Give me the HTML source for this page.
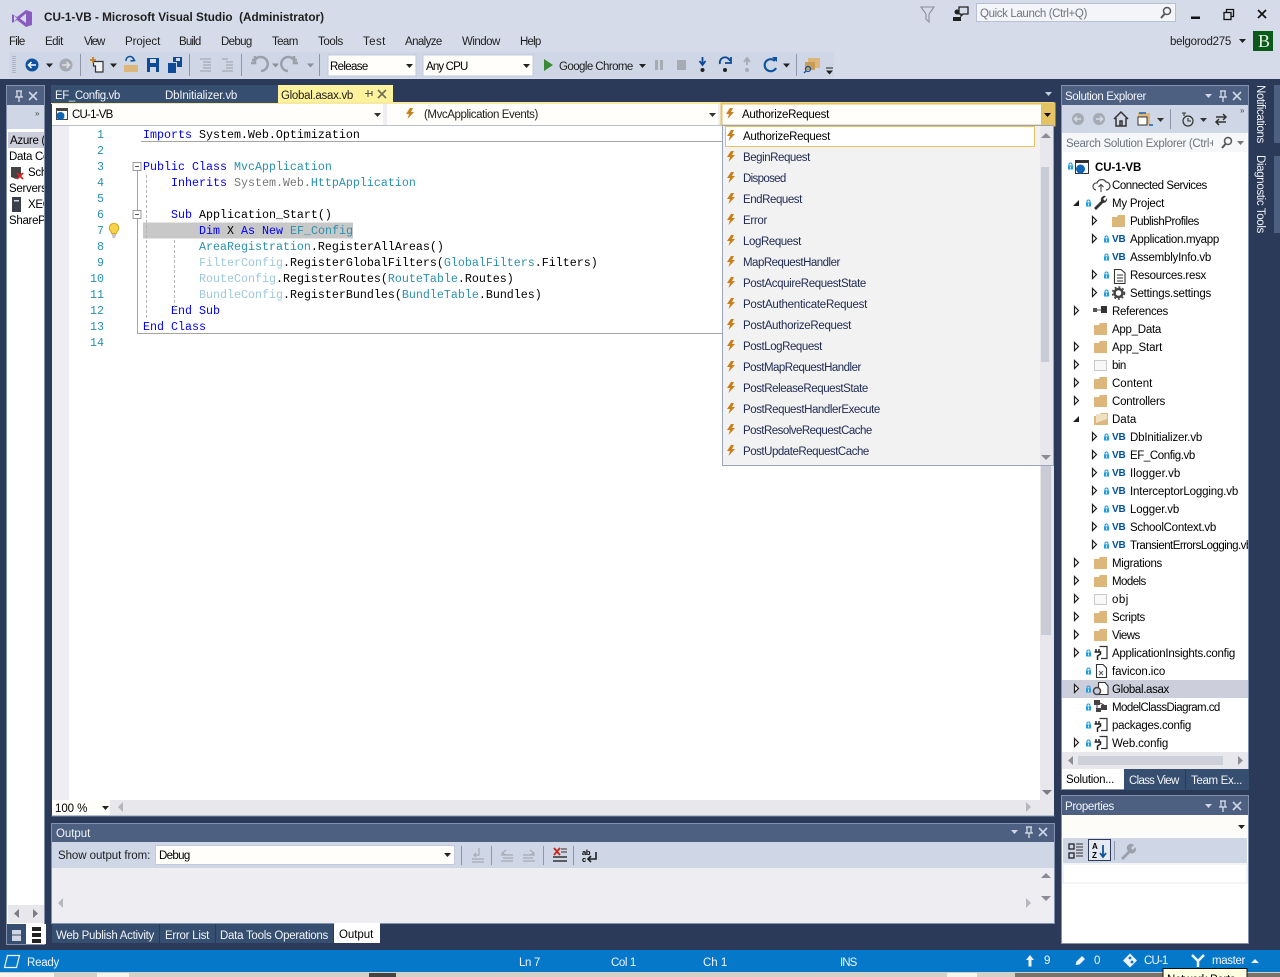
<!DOCTYPE html>
<html><head><meta charset="utf-8"><title>CU-1-VB - Microsoft Visual Studio</title>
<style>
html,body{margin:0;padding:0;background:#2a3a58}
svg{display:block;font-family:"Liberation Sans",sans-serif;font-size:11.5px;letter-spacing:-0.3px}
.d{fill:#1e1e1e}.k{fill:#000}.w{fill:#f2f4f8}.n{fill:#1f2a52}.g{fill:#6f7480}
.m{font-family:"Liberation Mono",monospace;font-size:11.67px;white-space:pre;letter-spacing:0}
.b{fill:#0000ff}.t{fill:#2b91af}.l{fill:#9cc9da}.y{fill:#777}
.vb{font-weight:bold;font-size:10px;fill:#00509e;letter-spacing:-0.2px}
</style></head><body>
<svg width="1280" height="977" viewBox="0 0 1280 977" xmlns="http://www.w3.org/2000/svg">
<defs>
<symbol id="folder" overflow="visible"><path d="M0 2h5l1-2h7v12H0z" fill="#dcb67a"/></symbol>
<symbol id="lock" overflow="visible"><path d="M1 3V1.500a1.500 1.500 0 0 1 3 0V3" fill="none" stroke="#1e9ce0" stroke-width="1"/><rect x="0" y="2.500" width="5" height="4" fill="#1e9ce0"/><rect x="2" y="3.500" width="1" height="2" fill="#fff"/></symbol>
<symbol id="exp" overflow="visible"><path d="M0.5 0.5L4.5 4.5L0.5 8.5Z" fill="#fff" stroke="#1e1e1e" stroke-width="1.2"/></symbol>
<symbol id="open" overflow="visible"><path d="M6 0V6H0Z" fill="#1e1e1e"/></symbol>
<symbol id="bolt" overflow="visible"><path d="M4 0L0 6H3L1.5 11L8 4H5L7 0Z" fill="#c97f1c"/></symbol>
<symbol id="cfg" overflow="visible"><path d="M5.5 0.5H13V12.5H7" fill="#fff" stroke="#333" stroke-width="1.2"/><path d="M2 3V6M5 3V6M0.5 6H6.5V8L3.5 10V14" fill="none" stroke="#222" stroke-width="1.5"/></symbol>
<symbol id="title3" overflow="visible"><path d="M-5 -2H2L-1.500 2Z" fill="#cfd6e5"/><path d="M10 -5H16M11 -5V1H15V-5M9 1H17M13 1V6" fill="none" stroke="#dfe4ee" stroke-width="1.2"/><path d="M23 -4L31 4M31 -4L23 4" stroke="#cfd6e5" stroke-width="1.6"/></symbol>
<symbol id="dn" overflow="visible"><path d="M0 0H7L3.500 4Z"/></symbol>
</defs>

<!-- base -->
<rect width="1280" height="977" fill="#2a3a58"/>
<rect width="1280" height="79" fill="#d6dbe9"/>

<!-- title bar -->
<path d="M12 14L17 17L26 10L32 12V25L26 27L17 20L12 23Z" fill="#8a5cc0"/>
<path d="M26 13.500V23L20 18.500Z" fill="#d6dbe9"/><path d="M14 15.500V21.500L17 18.500Z" fill="#d6dbe9"/>
<text x="44" y="21" textLength="280" class="d" font-weight="bold" lengthAdjust="spacingAndGlyphs" style="letter-spacing:0">CU-1-VB - Microsoft Visual Studio &#160;(Administrator)</text>
<path d="M921 7H934L929 14V22L926 19V14Z" fill="none" stroke="#8b8f98" stroke-width="1.1"/>
<path d="M959 7H968V14H963L961 16V14H959Z" fill="none" stroke="#222" stroke-width="1.3"/><circle cx="957" cy="12" r="2.500" fill="#222"/><path d="M953 21V17H961V21Z" fill="#222"/>
<rect x="976.500" y="3.500" width="199" height="18" fill="#f4f5f9" stroke="#b8c0d4"/>
<text x="980" y="17" fill="#6f7480" textLength="107">Quick Launch (Ctrl+Q)</text>
<circle cx="1167" cy="11" r="3.500" fill="none" stroke="#555" stroke-width="1.500"/><path d="M1164.500 14L1161 18" stroke="#555" stroke-width="2"/>
<rect x="1191" y="16.500" width="9" height="2.500" fill="#111"/>
<rect x="1224" y="12.500" width="7" height="7" fill="none" stroke="#111" stroke-width="1.300"/><path d="M1226.500 12V9.500H1233.500V16.500H1231" fill="none" stroke="#111" stroke-width="1.300"/>
<path d="M1258 10L1266 18M1266 10L1258 18" stroke="#111" stroke-width="1.700"/>

<!-- menu -->
<g class="d">
<text x="9" y="45" textLength="16">File</text><text x="45" y="45" textLength="18">Edit</text><text x="84" y="45" textLength="21">View</text><text x="125" y="45" textLength="35">Project</text><text x="179" y="45" textLength="22">Build</text><text x="221" y="45" textLength="31">Debug</text><text x="272" y="45" textLength="26">Team</text><text x="318" y="45" textLength="25">Tools</text><text x="363" y="45" textLength="22">Test</text><text x="405" y="45" textLength="37">Analyze</text><text x="462" y="45" textLength="38">Window</text><text x="520" y="45" textLength="21">Help</text>
<text x="1170" y="45" textLength="61">belgorod275</text>
</g>
<use href="#dn" x="1239" y="39" fill="#222"/>
<rect x="1253" y="31" width="20" height="20" fill="#0a5a1c"/>
<text x="1258" y="47" font-size="18" fill="#e8f0e8" style="font-family:'Liberation Serif',serif">B</text>

<!-- toolbar -->
<rect x="9" y="52" width="825" height="26" fill="#cfd6e5"/>
<path d="M13 56V74M15 56V74" stroke="#8b93a8" stroke-dasharray="1 1"/>
<circle cx="32" cy="65" r="6.500" fill="#0f539e"/><path d="M36 65H29M31.500 62L28.500 65L31.500 68" fill="none" stroke="#fff" stroke-width="1.500"/>
<use href="#dn" x="46" y="63.500" fill="#222"/>
<circle cx="66" cy="65" r="6.500" fill="#a6aab3"/><path d="M62 65H69M66.500 62L69.500 65L66.500 68" fill="none" stroke="#e0e2e8" stroke-width="1.500"/>
<path d="M80.500 54V76" stroke="#8f96ab"/>
<path d="M93.500 61.500H103V72H95.500V66H93.500Z" fill="#f3f3f6" stroke="#333" stroke-width="1.200"/><path d="M93 57V63M90 60H96" stroke="#c8811d" stroke-width="1.800"/>
<use href="#dn" x="110" y="63.500" fill="#222"/>
<path d="M124 65H138V72H124Z" fill="#dcb67a"/><path d="M126 61A4 4 0 0 1 134 60M132 57L134.500 60.500L130.500 61" fill="none" stroke="#0f539e" stroke-width="1.500"/>
<path d="M147 58H159V72H147Z" fill="#0f4a96"/><rect x="150" y="59" width="6" height="4" fill="#d6dbe9"/><rect x="150" y="67" width="6" height="5" fill="#cfd6e5"/>
<path d="M168 63H176V73H168Z" fill="#0f4a96"/><path d="M173 57H182V67H177V62H173Z" fill="#0f4a96"/><rect x="176" y="58" width="4" height="3" fill="#d6dbe9"/>
<path d="M189.500 54V76" stroke="#8f96ab"/>
<path d="M200 59H211M203 62H211M203 65H211M203 68H211M200 71H211" stroke="#a6aab3" stroke-width="1.200"/>
<path d="M222 59H228M226 62H233M226 65H233M226 68H233M222 71H233" stroke="#a6aab3" stroke-width="1.200"/>
<path d="M241.500 54V76" stroke="#8f96ab"/>
<path d="M261 71A7 7 0 1 0 255 60H252M255 56V63H251" fill="none" stroke="#9ba0ab" stroke-width="2.500"/>
<use href="#dn" x="272" y="63.500" fill="#8b8f98"/>
<path d="M288 71A7 7 0 1 1 294 60H297M294 56V63H298" fill="none" stroke="#9ba0ab" stroke-width="2.500"/>
<use href="#dn" x="307" y="63.500" fill="#8b8f98"/>
<path d="M319.500 54V76" stroke="#8f96ab"/>
<rect x="328" y="55" width="88" height="21" fill="#fffefb" stroke="#c3cadb"/>
<text x="330" y="70" class="k" textLength="38">Release</text><use href="#dn" x="406" y="64" fill="#222"/>
<rect x="423" y="55" width="110" height="21" fill="#fffefb" stroke="#c3cadb"/>
<text x="426" y="70" class="k" textLength="42">Any CPU</text><use href="#dn" x="523" y="64" fill="#222"/>
<path d="M544 59L553 65L544 71Z" fill="#388a34"/>
<text x="559" y="70" class="d" textLength="74">Google Chrome</text>
<use href="#dn" x="639" y="64" fill="#222"/>
<rect x="655" y="60" width="3" height="10" fill="#a6aab3"/><rect x="660" y="60" width="3" height="10" fill="#a6aab3"/>
<rect x="677" y="60" width="9" height="10" fill="#a6aab3"/>
<path d="M702.500 57V64M699.500 61L702.500 65L705.500 61" fill="none" stroke="#0f4a96" stroke-width="1.800"/><circle cx="702.500" cy="70" r="2" fill="#222"/>
<path d="M720 64A5 5 0 0 1 730 61M731 57V63H725" fill="none" stroke="#0f4a96" stroke-width="1.800"/><circle cx="725" cy="70" r="2" fill="#222"/>
<path d="M747 65V59M744 62L747 58L750 62" fill="none" stroke="#a6aab3" stroke-width="1.800"/><circle cx="747" cy="70" r="2" fill="#a6aab3"/>
<path d="M775 61A6 6 0 1 0 776 68" fill="none" stroke="#0f539e" stroke-width="2.200"/><path d="M772 57H777V62Z" fill="#0f539e"/>
<use href="#dn" x="783" y="63.500" fill="#222"/>
<path d="M796.500 54V76" stroke="#8f96ab"/>
<rect x="808" y="58" width="12" height="10" fill="#dcb67a"/><rect x="805" y="62" width="10" height="8" fill="#c99c5a"/>
<circle cx="808" cy="69" r="2.500" fill="none" stroke="#0f539e" stroke-width="1.200"/><path d="M806 71L804 73" stroke="#0f539e" stroke-width="1.300"/>
<path d="M826 68H833" stroke="#222"/><use href="#dn" x="826" y="70.500" fill="#222"/>

<!-- left panel -->
<rect x="6.500" y="85.500" width="38" height="859" fill="#fff" stroke="#8391ad"/>
<rect x="7" y="86" width="37" height="19" fill="#4d6082"/>
<path d="M16 91H22M17 91V97H21V91M15 97H23M19 97V102" fill="none" stroke="#dfe4ee" stroke-width="1.200"/>
<path d="M29 92L37 100M37 92L29 100" stroke="#cfd6e5" stroke-width="1.600"/>
<rect x="7" y="105" width="37" height="24" fill="#cfd6e5"/>
<text x="35" y="116" font-size="8" fill="#444">»</text>
<rect x="8" y="132" width="36" height="16" fill="#cccedb"/>
<clipPath id="lc"><rect x="8" y="125" width="36" height="110"/></clipPath>
<g clip-path="url(#lc)" class="k">
<text x="10" y="144">Azure (Internet)</text>
<text x="9" y="160">Data Connections</text>
<text x="28" y="176">School</text>
<text x="9" y="192">Servers</text>
<text x="28" y="208">XEON</text>
<text x="9" y="224">SharePoint</text>
</g>
<path d="M11 167H21V177L16 179L11 177Z" fill="#444"/><path d="M17 173L23 179M23 173L17 179" stroke="#d8261c" stroke-width="1.800"/>
<rect x="12" y="197" width="9" height="15" fill="#3a3f48"/><rect x="14" y="200" width="5" height="1.500" fill="#cfd6e5"/>
<rect x="8" y="905" width="36" height="18" fill="#e8e8ec"/>
<path d="M19 909V918L14 913.500ZM33 909V918L38 913.500Z" fill="#7a7d85"/>
<rect x="7" y="924" width="19" height="20" fill="#364e6f"/><rect x="27" y="924" width="19" height="20" fill="#fff"/>
<path d="M12 930H21V941H12Z" fill="#cfd6e5"/><path d="M14 930V927H19V930M12 935H21" stroke="#364e6f" fill="none"/>
<path d="M32 927H41V931H32ZM32 933H41V937H32ZM32 939H41V943H32Z" fill="#222"/>

<!-- tabs -->
<rect x="51" y="85" width="227" height="19" fill="#364e6f"/>
<rect x="278" y="85" width="115" height="17" fill="#fff29d"/>
<rect x="278" y="102" width="776" height="2" fill="#f7e9a0"/>
<rect x="51" y="103" width="227" height="1" fill="#f7e9a0"/>
<text x="55" y="99" class="w" textLength="65">EF_Config.vb</text>
<text x="165" y="99" class="w" textLength="72">DbInitializer.vb</text>
<text x="281" y="99" class="d" textLength="72">Global.asax.vb</text>
<path d="M365 93.500H372M368 90V97M372 91V96" stroke="#555" stroke-width="1.100"/>
<path d="M378 90L386 98M386 90L378 98" stroke="#6b6a55" stroke-width="1.600"/>
<use href="#dn" x="1045" y="92" fill="#c5cde0"/>

<!-- editor frame -->
<rect x="52" y="104" width="1002" height="712" fill="#eeeef2"/>
<rect x="52" y="104" width="331" height="21" fill="#fffefb"/>
<rect x="387" y="104" width="331" height="21" fill="#fffefb"/>
<rect x="56.500" y="108.500" width="11" height="11" fill="#fff" stroke="#444"/><rect x="56" y="108" width="12" height="3" fill="#444"/><circle cx="60.500" cy="116" r="4" fill="#0f64b4"/>
<text x="72" y="118" class="k" textLength="41">CU-1-VB</text>
<use href="#dn" x="374" y="113" fill="#333"/>
<use href="#bolt" x="406" y="108"/>
<text x="424" y="118" class="d" textLength="114">(MvcApplication Events)</text>
<use href="#dn" x="709" y="113" fill="#333"/>
<rect x="721.500" y="103.500" width="333" height="22" fill="#fffefb" stroke="#e5c365" stroke-width="2"/>
<rect x="1041" y="104" width="13" height="21" fill="#e5c365"/>
<use href="#dn" x="1044" y="113" fill="#111"/>
<use href="#bolt" x="726" y="108"/>
<text x="742" y="118" class="k" textLength="87">AuthorizeRequest</text>

<!-- code -->
<rect x="69" y="125" width="971" height="675" fill="#fff"/>
<rect x="52" y="125" width="17" height="675" fill="#eeeef2"/>
<path d="M52 125.500H722" stroke="#b9bfcf"/>
<rect x="143" y="222.500" width="210" height="16" fill="#c8c8c8"/>
<g text-anchor="end">
<text x="104" y="138" class="m t">1</text><text x="104" y="154" class="m t">2</text><text x="104" y="170" class="m t">3</text><text x="104" y="186" class="m t">4</text><text x="104" y="202" class="m t">5</text><text x="104" y="218" class="m t">6</text><text x="104" y="234" class="m t">7</text><text x="104" y="250" class="m t">8</text><text x="104" y="266" class="m t">9</text><text x="104" y="282" class="m t">10</text><text x="104" y="298" class="m t">11</text><text x="104" y="314" class="m t">12</text><text x="104" y="330" class="m t">13</text><text x="104" y="346" class="m t">14</text>
</g>
<g xml:space="preserve">
<text x="143" y="138" class="m k"><tspan class="b">Imports</tspan> System.Web.Optimization</text>
<text x="143" y="170" class="m k"><tspan class="b">Public Class</tspan> <tspan class="t">MvcApplication</tspan></text>
<text x="171" y="186" class="m k"><tspan class="b">Inherits</tspan> <tspan class="y">System.Web.</tspan><tspan class="t">HttpApplication</tspan></text>
<text x="171" y="218" class="m k"><tspan class="b">Sub</tspan> Application_Start()</text>
<text x="199" y="234" class="m k"><tspan class="b">Dim</tspan> X <tspan class="b">As New</tspan> <tspan class="t">EF_Config</tspan></text>
<text x="199" y="250" class="m k"><tspan class="t">AreaRegistration</tspan>.RegisterAllAreas()</text>
<text x="199" y="266" class="m k"><tspan class="l">FilterConfig</tspan>.RegisterGlobalFilters(<tspan class="t">GlobalFilters</tspan>.Filters)</text>
<text x="199" y="282" class="m k"><tspan class="l">RouteConfig</tspan>.RegisterRoutes(<tspan class="t">RouteTable</tspan>.Routes)</text>
<text x="199" y="298" class="m k"><tspan class="l">BundleConfig</tspan>.RegisterBundles(<tspan class="t">BundleTable</tspan>.Bundles)</text>
<text x="171" y="314" class="m k"><tspan class="b">End Sub</tspan></text>
<text x="143" y="330" class="m k"><tspan class="b">End Class</tspan></text>
</g>
<!-- outline -->
<path d="M141 141.500H722M137.500 171V333.500H722" fill="none" stroke="#a5a5a5"/>
<rect x="133" y="162.500" width="8" height="8" fill="#fff" stroke="#999"/><path d="M135 166.500H139" stroke="#555"/>
<rect x="133" y="210.500" width="8" height="8" fill="#fff" stroke="#999"/><path d="M135 214.500H139" stroke="#555"/>
<path d="M146.500 175V318M174.500 240V310" stroke="#b5b5b5" stroke-dasharray="3 2"/>
<path d="M114 223.500a4.500 4.500 0 0 1 3 8l-.5 2h-5l-.5-2a4.500 4.500 0 0 1 3-8z" fill="#f6d44a" stroke="#d9a514"/><path d="M112 235H116M112.500 237H115.500" stroke="#888"/>

<!-- editor scrollbar + bottom -->
<rect x="1040" y="125" width="14" height="675" fill="#e8e8ec"/>
<rect x="1041" y="165" width="10" height="470" fill="#c9ccd6"/>
<path d="M1042 790H1052L1047 795Z" fill="#7a7d85"/>
<rect x="52" y="800" width="1002" height="15" fill="#e8e8ec"/>
<rect x="52" y="800" width="58" height="15" fill="#fffefb"/>
<text x="55" y="812" class="k" textLength="32">100 %</text>
<use href="#dn" x="102" y="806" fill="#222"/>
<path d="M123 802V812L118 807Z" fill="#b5b7bf"/><path d="M1026 802V812L1031 807Z" fill="#b5b7bf"/>
<rect x="51.500" y="815.500" width="1003" height="1" fill="#8391ad"/>

<!-- dropdown list -->
<rect x="722.500" y="125.500" width="331" height="340" fill="#f2f2f2" stroke="#9aa5bd"/>
<rect x="1040" y="126" width="13" height="339" fill="#e8e8ec"/>
<rect x="1041" y="167" width="8" height="195" fill="#c9ccd6"/>
<path d="M1041 138H1051L1046 133Z" fill="#8a8d95"/><path d="M1041 455H1051L1046 460Z" fill="#8a8d95"/>
<rect x="725.500" y="126.500" width="309" height="20" fill="#fff" stroke="#e5c365"/>
<g>
<use href="#bolt" x="727" y="130"/><use href="#bolt" x="727" y="151"/><use href="#bolt" x="727" y="172"/><use href="#bolt" x="727" y="193"/><use href="#bolt" x="727" y="214"/><use href="#bolt" x="727" y="235"/><use href="#bolt" x="727" y="256"/><use href="#bolt" x="727" y="277"/><use href="#bolt" x="727" y="298"/><use href="#bolt" x="727" y="319"/><use href="#bolt" x="727" y="340"/><use href="#bolt" x="727" y="361"/><use href="#bolt" x="727" y="382"/><use href="#bolt" x="727" y="403"/><use href="#bolt" x="727" y="424"/><use href="#bolt" x="727" y="445"/>
</g>
<text x="743" y="140" class="k" textLength="87">AuthorizeRequest</text>
<g class="n">
<text x="743" y="161" textLength="67">BeginRequest</text>
<text x="743" y="182" textLength="43">Disposed</text>
<text x="743" y="203" textLength="59">EndRequest</text>
<text x="743" y="224" textLength="24">Error</text>
<text x="743" y="245" textLength="58">LogRequest</text>
<text x="743" y="266" textLength="97">MapRequestHandler</text>
<text x="743" y="287" textLength="123">PostAcquireRequestState</text>
<text x="743" y="308" textLength="124">PostAuthenticateRequest</text>
<text x="743" y="329" textLength="108">PostAuthorizeRequest</text>
<text x="743" y="350" textLength="79">PostLogRequest</text>
<text x="743" y="371" textLength="118">PostMapRequestHandler</text>
<text x="743" y="392" textLength="125">PostReleaseRequestState</text>
<text x="743" y="413" textLength="137">PostRequestHandlerExecute</text>
<text x="743" y="434" textLength="129">PostResolveRequestCache</text>
<text x="743" y="455" textLength="126">PostUpdateRequestCache</text>
</g>

<!-- output -->
<rect x="51.500" y="823.500" width="1003" height="100" fill="#eeeef2" stroke="#8391ad"/>
<rect x="52" y="824" width="1002" height="18" fill="#4d6082"/>
<text x="56" y="837" class="w" textLength="34">Output</text>
<use href="#title3" x="1016" y="832"/>
<rect x="52" y="842" width="1002" height="26" fill="#cfd6e5"/>
<text x="58" y="859" class="d" textLength="92">Show output from:</text>
<rect x="155.500" y="845.500" width="299" height="19" fill="#fffefb" stroke="#c3cadb"/>
<text x="159" y="859" class="k" textLength="31">Debug</text>
<use href="#dn" x="444" y="853" fill="#222"/>
<path d="M461.500 846V865M491.500 846V865M543.500 846V865M573.500 846V865" stroke="#8f96ab"/>
<path d="M472 859H484M472 862H484M479 848V855H474M476 853L474 855L476 857" fill="none" stroke="#a6aab3" stroke-width="1.200"/>
<path d="M501 855H513M503 858H513M501 861H513M506 850L502 853L506 855" fill="none" stroke="#a6aab3" stroke-width="1.200"/>
<path d="M523 855H535M523 858H533M523 861H535M530 850L534 853L530 855" fill="none" stroke="#a6aab3" stroke-width="1.200"/>
<path d="M553 857H567M553 861H567" stroke="#333" stroke-width="1.600"/><path d="M554 848L560 855M560 848L554 855" stroke="#c8261c" stroke-width="1.800"/><path d="M561 849H567M561 852H567" stroke="#333"/>
<text x="582" y="855" font-size="7.500" class="k" font-weight="bold">ab</text><text x="582" y="862" font-size="7.500" class="k" font-weight="bold">c</text>
<path d="M596 852V859H589M591 856L588 859L591 862" fill="none" stroke="#222" stroke-width="1.600"/>
<path d="M1041 878H1051L1046 873Z" fill="#8a8d95"/><path d="M1041 896H1051L1046 901Z" fill="#8a8d95"/>
<path d="M63 898V908L58 903Z" fill="#b5b7bf"/><path d="M1026 898V908L1031 903Z" fill="#b5b7bf"/>

<rect x="52" y="924" width="107" height="19" fill="#364e6f"/>
<rect x="160" y="924" width="55" height="19" fill="#364e6f"/>
<rect x="216" y="924" width="117" height="19" fill="#364e6f"/>
<rect x="334" y="923" width="46" height="20" fill="#fff"/>
<text x="56" y="939" class="w" textLength="98">Web Publish Activity</text>
<text x="165" y="939" class="w" textLength="44">Error List</text>
<text x="220" y="939" class="w" textLength="108">Data Tools Operations</text>
<text x="339" y="938" class="k" textLength="34">Output</text>

<!-- solution explorer -->
<rect x="1061.500" y="85.500" width="187" height="704" fill="#fff" stroke="#8391ad"/>
<rect x="1062" y="86" width="186" height="19" fill="#4d6082"/>
<text x="1065" y="100" class="w" textLength="81">Solution Explorer</text>
<use href="#title3" x="1210" y="96"/>
<rect x="1062" y="105" width="186" height="28" fill="#cfd6e5"/>
<circle cx="1078" cy="119" r="6" fill="#a6aab3"/><path d="M1081 119H1075M1077 116.500L1074.500 119L1077 121.500" fill="none" stroke="#d6dbe9" stroke-width="1.400"/>
<circle cx="1099" cy="119" r="6" fill="#a6aab3"/><path d="M1096 119H1102M1100 116.500L1102.500 119L1100 121.500" fill="none" stroke="#d6dbe9" stroke-width="1.400"/>
<path d="M1114 119L1121 112L1128 119M1116 118V126H1126V118M1120 126V121H1122V126" fill="none" stroke="#333" stroke-width="1.500"/>
<rect x="1138" y="113" width="12" height="12" fill="#dcb67a"/><rect x="1138" y="117" width="9" height="8" fill="#fff" stroke="#333"/><path d="M1139 113H1146M1149 125H1153" stroke="#0f64b4" stroke-width="1.400"/>
<use href="#dn" x="1157" y="118" fill="#333"/>
<path d="M1170.500 109V129" stroke="#8f96ab"/>
<circle cx="1188" cy="121" r="5" fill="none" stroke="#333" stroke-width="1.200"/><path d="M1188 118V121H1191M1182 113H1186M1184 113V116" fill="none" stroke="#333" stroke-width="1.100"/>
<use href="#dn" x="1200" y="118" fill="#333"/>
<path d="M1216 117H1226M1223 114L1226 117L1223 120M1226 122H1216M1219 119L1216 122L1219 125" fill="none" stroke="#333" stroke-width="1.500"/>
<text x="1240" y="113" font-size="8" fill="#444">»</text>
<rect x="1063" y="133" width="184" height="19" fill="#f6f7f9"/>
<clipPath id="sc"><rect x="1063" y="133" width="150" height="19"/></clipPath>
<text x="1066" y="147" clip-path="url(#sc)" fill="#6f7480">Search Solution Explorer (Ctrl+;)</text>
<circle cx="1228" cy="141" r="3.500" fill="none" stroke="#555" stroke-width="1.500"/><path d="M1225.500 144L1222 148" stroke="#555" stroke-width="2"/>
<use href="#dn" x="1237" y="141" fill="#777"/>

<!-- tree -->
<rect x="1062" y="680" width="186" height="18" fill="#cccedb"/>
<clipPath id="tc"><rect x="1062" y="152" width="186" height="600"/></clipPath>
<g clip-path="url(#tc)">
<g class="k">
<text x="1095" y="171" font-weight="bold" textLength="46">CU-1-VB</text>
<text x="1112" y="189" textLength="95">Connected Services</text>
<text x="1112" y="207" textLength="52">My Project</text>
<text x="1130" y="225" textLength="69">PublishProfiles</text>
<text x="1130" y="243" textLength="89">Application.myapp</text>
<text x="1130" y="261" textLength="81">AssemblyInfo.vb</text>
<text x="1130" y="279" textLength="76">Resources.resx</text>
<text x="1130" y="297" textLength="81">Settings.settings</text>
<text x="1112" y="315" textLength="56">References</text>
<text x="1112" y="333" textLength="49">App_Data</text>
<text x="1112" y="351" textLength="50">App_Start</text>
<text x="1112" y="369" textLength="14">bin</text>
<text x="1112" y="387" textLength="40">Content</text>
<text x="1112" y="405" textLength="53">Controllers</text>
<text x="1112" y="423" textLength="24">Data</text>
<text x="1130" y="441" textLength="72">DbInitializer.vb</text>
<text x="1130" y="459" textLength="65">EF_Config.vb</text>
<text x="1130" y="477" textLength="50">Ilogger.vb</text>
<text x="1130" y="495" textLength="108">InterceptorLogging.vb</text>
<text x="1130" y="513" textLength="49">Logger.vb</text>
<text x="1130" y="531" textLength="86">SchoolContext.vb</text>
<text x="1130" y="549" textLength="122">TransientErrorsLogging.vb</text>
<text x="1112" y="567" textLength="50">Migrations</text>
<text x="1112" y="585" textLength="34">Models</text>
<text x="1112" y="603" textLength="16">obj</text>
<text x="1112" y="621" textLength="33">Scripts</text>
<text x="1112" y="639" textLength="28">Views</text>
<text x="1112" y="657" textLength="123">ApplicationInsights.config</text>
<text x="1112" y="675" textLength="53">favicon.ico</text>
<text x="1112" y="693" textLength="57">Global.asax</text>
<text x="1112" y="711" textLength="108">ModelClassDiagram.cd</text>
<text x="1112" y="729" textLength="79">packages.config</text>
<text x="1112" y="747" textLength="56">Web.config</text>
</g>
<!-- root icons -->
<use href="#lock" x="1068" y="163"/>
<rect x="1075.500" y="160.500" width="13" height="13" fill="#fff" stroke="#333"/><rect x="1075" y="160" width="14" height="3" fill="#333"/><circle cx="1080.500" cy="169" r="4.500" fill="#0f64b4"/>
<!-- connected services -->
<path d="M1096 190a3.500 3.500 0 0 1 1-7a5 5 0 0 1 9-1a4 4 0 0 1 0 8" fill="none" stroke="#444" stroke-width="1.200"/><path d="M1101 192V185M1098.500 187L1101 184.500L1103.500 187" fill="none" stroke="#444" stroke-width="1.100"/>
<!-- my project -->
<use href="#open" x="1073" y="200"/><use href="#lock" x="1086" y="200"/>
<path d="M1094 208L1101 201A4 4 0 0 1 1106 196L1103 199L1105 201L1107 198A4 4 0 0 1 1103 203L1096 210Z" fill="#333"/>
<!-- expanders level 1 -->
<use href="#exp" x="1092" y="216"/><use href="#folder" x="1112" y="215"/>
<use href="#exp" x="1092" y="234"/><use href="#lock" x="1104" y="236"/><text x="1112" y="242" class="vb">VB</text>
<use href="#lock" x="1104" y="254"/><text x="1112" y="260" class="vb">VB</text>
<use href="#exp" x="1092" y="270"/><use href="#lock" x="1104" y="272"/>
<path d="M1114.500 269.500H1121L1125 273V283.500H1114.500Z" fill="#fff" stroke="#333" stroke-width="1.100"/><path d="M1117 275H1123M1117 278H1123M1117 281H1123" stroke="#333"/>
<use href="#exp" x="1092" y="288"/><use href="#lock" x="1104" y="290"/>
<circle cx="1118.500" cy="293" r="4" fill="none" stroke="#444" stroke-width="2.500"/><circle cx="1118.500" cy="293" r="6" fill="none" stroke="#444" stroke-width="1.500" stroke-dasharray="2 2"/>
<!-- references -->
<use href="#exp" x="1074" y="306"/>
<rect x="1093" y="308" width="4" height="4" fill="#555"/><path d="M1097 310H1101" stroke="#555"/><rect x="1101" y="306" width="6" height="7" fill="#333"/>
<use href="#folder" x="1094" y="323"/>
<use href="#exp" x="1074" y="342"/><use href="#folder" x="1094" y="341"/>
<use href="#exp" x="1074" y="360"/><rect x="1094.500" y="360.500" width="12" height="10" fill="#f8f8f8" stroke="#999" stroke-dasharray="1 1"/>
<use href="#exp" x="1074" y="378"/><use href="#folder" x="1094" y="377"/>
<use href="#exp" x="1074" y="396"/><use href="#folder" x="1094" y="395"/>
<use href="#open" x="1073" y="416"/>
<path d="M1094 416H1099L1101 413H1108V425H1094Z" fill="#dcb67a"/><path d="M1096 414H1107V419L1096 423Z" fill="#f0e0c2"/>
<!-- data children -->
<use href="#exp" x="1092" y="432"/><use href="#lock" x="1104" y="434"/><text x="1112" y="440" class="vb">VB</text>
<use href="#exp" x="1092" y="450"/><use href="#lock" x="1104" y="452"/><text x="1112" y="458" class="vb">VB</text>
<use href="#exp" x="1092" y="468"/><use href="#lock" x="1104" y="470"/><text x="1112" y="476" class="vb">VB</text>
<use href="#exp" x="1092" y="486"/><use href="#lock" x="1104" y="488"/><text x="1112" y="494" class="vb">VB</text>
<use href="#exp" x="1092" y="504"/><use href="#lock" x="1104" y="506"/><text x="1112" y="512" class="vb">VB</text>
<use href="#exp" x="1092" y="522"/><use href="#lock" x="1104" y="524"/><text x="1112" y="530" class="vb">VB</text>
<use href="#exp" x="1092" y="540"/><use href="#lock" x="1104" y="542"/><text x="1112" y="548" class="vb">VB</text>
<use href="#exp" x="1074" y="558"/><use href="#folder" x="1094" y="557"/>
<use href="#exp" x="1074" y="576"/><use href="#folder" x="1094" y="575"/>
<use href="#exp" x="1074" y="594"/><rect x="1094.500" y="594.500" width="12" height="10" fill="#f8f8f8" stroke="#999" stroke-dasharray="1 1"/>
<use href="#exp" x="1074" y="612"/><use href="#folder" x="1094" y="611"/>
<use href="#exp" x="1074" y="630"/><use href="#folder" x="1094" y="629"/>
<!-- bottom files -->
<use href="#exp" x="1074" y="648"/><use href="#lock" x="1086" y="650"/><use href="#cfg" x="1094" y="646"/>
<use href="#lock" x="1086" y="668"/><path d="M1096.500 664.500H1103L1106.500 668V677.500H1096.500Z" fill="#fff" stroke="#333" stroke-width="1.100"/><path d="M1099 671L1103 675M1103 671L1099 675" stroke="#555"/>
<use href="#exp" x="1074" y="684"/><use href="#lock" x="1086" y="686"/>
<path d="M1098.500 682.500H1105L1108 686V694.500H1098.500Z" fill="#fff" stroke="#333" stroke-width="1.100"/><circle cx="1097" cy="691" r="3.500" fill="#cccedb" stroke="#444" stroke-width="1.500"/>
<use href="#lock" x="1086" y="704"/>
<rect x="1094" y="700" width="6" height="5" fill="#444"/><rect x="1101" y="705" width="6" height="5" fill="#444"/><rect x="1096" y="708" width="5" height="4" fill="#444"/><path d="M1097 705V708M1100 703L1104 705" stroke="#444"/>
<use href="#lock" x="1086" y="722"/><use href="#cfg" x="1094" y="718"/>
<use href="#exp" x="1074" y="738"/><use href="#lock" x="1086" y="740"/><use href="#cfg" x="1094" y="736"/>
</g>
<rect x="1062" y="752" width="186" height="17" fill="#e8e8ec"/>
<rect x="1078" y="756" width="145" height="9" fill="#cdd0d9"/>
<path d="M1073 756V765L1068 760.500Z" fill="#8a8d95"/><path d="M1238 756V765L1243 760.500Z" fill="#8a8d95"/>
<rect x="1124" y="769" width="125" height="21" fill="#364e6f"/>
<path d="M1185.500 770V789" stroke="#2a3a58"/>
<text x="1066" y="783" class="k" textLength="48">Solution...</text>
<text x="1129" y="784" class="w" textLength="50">Class View</text>
<text x="1191" y="784" class="w" textLength="51">Team Ex...</text>

<!-- properties -->
<rect x="1061.500" y="795.500" width="187" height="148" fill="#fff" stroke="#8391ad"/>
<rect x="1062" y="796" width="186" height="19" fill="#4d6082"/>
<text x="1065" y="810" class="w" textLength="49">Properties</text>
<use href="#title3" x="1210" y="806"/>
<rect x="1062" y="815" width="186" height="23" fill="#fdfcf9"/>
<use href="#dn" x="1238" y="825" fill="#222"/>
<rect x="1063" y="838" width="184" height="25" fill="#cfd6e5"/>
<rect x="1069" y="844" width="5" height="5" fill="none" stroke="#222" stroke-width="1.300"/><rect x="1069" y="853" width="5" height="5" fill="none" stroke="#222" stroke-width="1.300"/><path d="M1076 844H1083M1076 847H1083M1076 850H1083M1076 853H1083M1076 856H1083" stroke="#333" stroke-width="1.100"/>
<rect x="1088.500" y="839.500" width="22" height="21" fill="#e6e9f2" stroke="#2a3a58"/>
<text x="1092" y="849" font-size="8" font-weight="bold" class="k">A</text><text x="1092" y="858" font-size="8" font-weight="bold" class="k">Z</text>
<path d="M1103 845V856M1100 853L1103 857L1106 853" fill="none" stroke="#0f539e" stroke-width="1.800"/>
<path d="M1114.500 841V860" stroke="#8f96ab"/>
<path d="M1121 858L1128 851A4 4 0 0 1 1134 845L1131 848L1133 850L1135 847A4 4 0 0 1 1130 853L1123 860Z" fill="#9ba0ab"/>
<rect x="1063" y="864" width="184" height="19" fill="#fff" stroke="#e6e8ee"/>

<!-- right strip -->
<rect x="1274" y="85" width="6" height="58" fill="#4d6082"/>
<rect x="1274" y="156" width="6" height="77" fill="#4d6082"/>
<text transform="translate(1257 85) rotate(90)" class="w" textLength="58">Notifications</text>
<text transform="translate(1257 155) rotate(90)" class="w" textLength="78">Diagnostic Tools</text>

<!-- status bar -->
<rect y="950" width="1280" height="22" fill="#0678c9"/>
<g fill="#eef4fa">
<path d="M7.500 955.500H19.500L16.500 967.500H4.500Z" fill="none" stroke="#eef4fa" stroke-width="1.200"/>
<text x="27" y="966" textLength="32">Ready</text>
<text x="519" y="966" textLength="21">Ln 7</text>
<text x="611" y="966" textLength="25">Col 1</text>
<text x="703" y="966" textLength="24">Ch 1</text>
<text x="840" y="966" textLength="17">INS</text>
<path d="M1026 960L1030 955L1034 960H1031.500V966.500H1028.500V960Z"/>
<text x="1044" y="964">9</text>
<path d="M1075.500 965L1076.500 961.500L1082 956L1085 959L1079.500 964.500Z"/>
<text x="1094" y="964">0</text>
<path d="M1130 953.500L1137 960.500L1130 967.500L1123 960.500Z"/><circle cx="1130" cy="958" r="1.400" fill="#0678c9"/><circle cx="1132" cy="962" r="1.400" fill="#0678c9"/>
<text x="1144" y="964" textLength="24">CU-1</text>
<path d="M1192 955L1198 961L1204 955M1198 961V967" fill="none" stroke="#eef4fa" stroke-width="2.500"/>
<text x="1212" y="964" textLength="33">master</text>
<path d="M1251 963H1259L1255 959Z"/>
</g>

<!-- bottom OS strip -->
<rect y="972" width="1280" height="5" fill="#d4d0c8"/>
<rect x="0" y="973" width="54" height="4" fill="#f4f3ee"/>
<rect x="97" y="973" width="32" height="4" fill="#f4f3ee"/>
<rect x="369" y="973" width="27" height="4" fill="#444"/>
<rect x="947" y="973" width="30" height="4" fill="#f4f3ee"/>
<rect x="1015" y="973" width="265" height="4" fill="#77736b"/>
<rect x="1163" y="968.500" width="84" height="9" fill="#ffffe1" stroke="#111"/>
<text x="1167" y="983" class="k">Network Ports</text>
</svg>
</body></html>
